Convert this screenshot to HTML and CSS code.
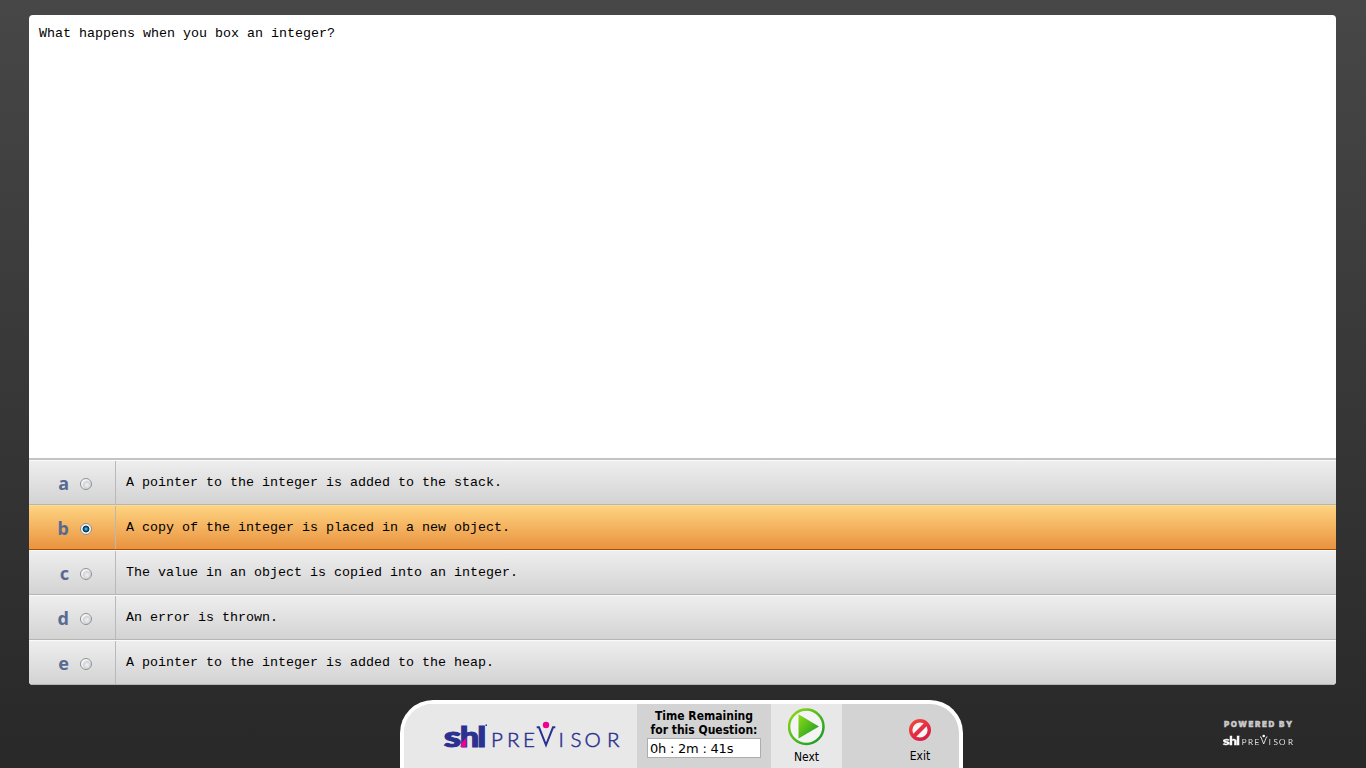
FILE: index.html
```html
<!DOCTYPE html>
<html lang="en">
<head>
<meta charset="utf-8">
<title>Assessment</title>
<link rel="stylesheet" href="styles.css">
</head>
<body>
<svg class="defs" width="0" height="0">
  <defs>
    <symbol id="logo" viewBox="0 0 180 30">
      <text class="logo-shl" x="0.800" y="26.500" textLength="17.500" lengthAdjust="spacingAndGlyphs">s</text>
      <text class="logo-shl" x="16.800" y="26.500" textLength="19.500" lengthAdjust="spacingAndGlyphs">h</text>
      <text class="logo-shl" x="34.300" y="26.500" textLength="9" lengthAdjust="spacingAndGlyphs">l</text>
      <path class="logo-accent" d="M17.300 27 Q18.500 21 23.300 18 L23.300 27 Z"/>
      <rect class="logo-ink" x="42.500" y="4.500" width="1.500" height="1.500"/>
      <text class="logo-name" y="26.500" x="48 64 80">PRE</text>
      <path class="logo-line" d="M93.700 7.300 L96 7.300 L103 25 L110 7.300 L112.300 7.300"/>
      <circle class="logo-accent" cx="103" cy="5" r="3.200"/>
      <text class="logo-name" y="26.500" x="115.500 127.500 141.500 164">ISOR</text>
    </symbol>
  </defs>
</svg>
<main class="panel">
  <div class="question">What happens when you box an integer?</div>
  <div class="answers">
    <label class="answer"><span class="choice"><b>a</b><i class="radio"></i></span><span class="text">A pointer to the integer is added to the stack.</span></label>
    <label class="answer selected"><span class="choice"><b>b</b><i class="radio"></i></span><span class="text">A copy of the integer is placed in a new object.</span></label>
    <label class="answer"><span class="choice"><b>c</b><i class="radio"></i></span><span class="text">The value in an object is copied into an integer.</span></label>
    <label class="answer"><span class="choice"><b>d</b><i class="radio"></i></span><span class="text">An error is thrown.</span></label>
    <label class="answer"><span class="choice"><b>e</b><i class="radio"></i></span><span class="text">A pointer to the integer is added to the heap.</span></label>
  </div>
</main>
<footer class="footer">
  <div class="toolbar">
    <div class="brand"><svg class="logo" width="180" height="30"><use href="#logo"/></svg></div>
    <div class="timer">
      <div class="timer-title">Time Remaining<br>for this Question:</div>
      <div class="timer-value">0h : 2m : 41s</div>
    </div>
    <div class="next">
      <svg width="38" height="38" viewBox="0 0 38 38">
        <defs><linearGradient id="green" x1="0" y1="0" x2="1" y2="1"><stop offset="0" stop-color="#8fdc12"/><stop offset="1" stop-color="#10962a"/></linearGradient></defs>
        <circle cx="18.300" cy="18.700" r="17.200" fill="#f4f4f4" stroke="url(#green)" stroke-width="2.500"/>
        <path d="M10.500 6.300 L31 18.500 L10.500 30.500 Z" fill="url(#green)"/>
      </svg>
      <span>Next</span>
    </div>
    <div class="exit">
      <svg width="24" height="24" viewBox="0 0 24 24">
        <defs><linearGradient id="red" gradientUnits="userSpaceOnUse" x1="4" y1="0" x2="20" y2="24"><stop offset="0" stop-color="#f5493c"/><stop offset="1" stop-color="#d4164a"/></linearGradient></defs>
        <circle cx="12" cy="12" r="9.300" fill="#f6f6f6" stroke="url(#red)" stroke-width="3.400"/>
        <path d="M6 18 L18 6" stroke="url(#red)" stroke-width="4"/>
      </svg>
      <span>Exit</span>
    </div>
  </div>
  <div class="powered">
    <div class="powered-title">POWERED BY</div>
    <svg class="logo logo-light" width="73" height="12"><use href="#logo"/></svg>
  </div>
</footer>
</body>
</html>
```
FILE: styles.css
```css
* { box-sizing: border-box; }
html { height: 100%; }
body {
  margin: 0;
  height: 768px;
  overflow: hidden;
  display: flex;
  flex-direction: column;
  padding: 15px 30px 0 29px;
  background: linear-gradient(#474747, #282828);
  font-family: "DejaVu Sans Condensed", "DejaVu Sans", sans-serif;
  color: #000;
}
.defs { display: none; }
.panel {
  display: flex;
  flex-direction: column;
  height: 670px;
  background: #fff;
  border-radius: 4px;
  overflow: hidden;
}
.question, .text { font: 13.333px/16px "Liberation Mono", monospace; white-space: pre; }
.question { flex: 1; padding: 11px 10px 10px; }
.answers { border-top: 2px solid #c3c3c3; }
.answer {
  display: flex;
  height: 45px;
  background: linear-gradient(#eee, #d3d3d3);
  border-bottom: 1px solid #b5b5b5;
  border-top: 1px solid #fafafa;
}
.selected {
  background: linear-gradient(#fed380, #e9933f);
  border-top-color: #ffdc93;
  border-bottom-color: #a4500c;
}
.choice {
  display: flex;
  align-items: center;
  justify-content: flex-end;
  width: 87px;
  padding: 3px 23px 0 0;
  border-right: 1px solid #b9b9b9;
  gap: 11px;
}
.choice b { padding-bottom: 2px; font: bold 18px/22px "Noto Sans", sans-serif; color: #596a92; }
.radio {
  width: 12px;
  height: 12px;
  border: 1px solid #909090;
  border-radius: 50%;
  background: radial-gradient(circle at 60% 60%, #f2f2f2 0, #d0d4d9 3.5px, #f6f6f6 5px);
}
.selected .radio { background: radial-gradient(circle at 5px 5px, #72d6f5 0, #177ba8 1.500px, #0b3352 2.800px, #0b3352 3px, #f4f4f4 3.800px); }
.text { padding: 14px 0 0 10px; }
.footer { display: flex; height: 83px; padding: 15px 0 0 371px; }
.toolbar {
  display: flex;
  width: 563px;
  height: 68px;
  border: 4px solid #fff;
  border-bottom: 0;
  border-radius: 33px 33px 0 0;
  background: #d3d3d3;
  overflow: hidden;
}
.brand { width: 233px; padding: 16px 0 0 39px; background: #e8e8e8; }
.logo { display: block; }
.logo-shl { font: 900 28px "Lato", sans-serif; fill: #2b3190; stroke: #2b3190; stroke-width: 1; }
.logo-name { font: 300 20.500px "Lato", sans-serif; fill: #2b3190; stroke: #2b3190; stroke-width: .5; }
.logo-ink { fill: #2b3190; }
.logo-line { fill: none; stroke: #2b3190; stroke-width: 2; }
.logo-accent { fill: #ed0090; }
.timer { width: 134px; padding: 5px 10px 0; text-align: center; }
.timer-title { margin: 0 -4px; font: bold 12px/14px "DejaVu Sans Condensed", sans-serif; white-space: nowrap; }
.timer-value {
  height: 20px;
  margin-top: 1px;
  padding-left: 2px;
  border: 1px solid #abadb3;
  background: #fff;
  text-align: left;
  font: 13px/20px "DejaVu Sans", sans-serif;
  letter-spacing: -.220px;
}
.next, .exit { display: flex; flex-direction: column; align-items: center; font-size: 12px; line-height: 14px; }
.next { width: 71px; padding-top: 4px; background: #e8e8e8; gap: 4px; }
.exit { margin-left: 66px; width: 24px; padding-top: 14px; gap: 7px; }
.powered { margin-left: 259px; padding-top: 19px; }
.powered-title { margin-left: 2px; font: 900 8px/10px "Inter", sans-serif; color: #c9c9c9; letter-spacing: 1.600px; -webkit-text-stroke: .4px #c9c9c9; white-space: nowrap; }
.powered .logo { margin-top: 5px; }
.logo-light { filter: grayscale(1) brightness(5); }
```
